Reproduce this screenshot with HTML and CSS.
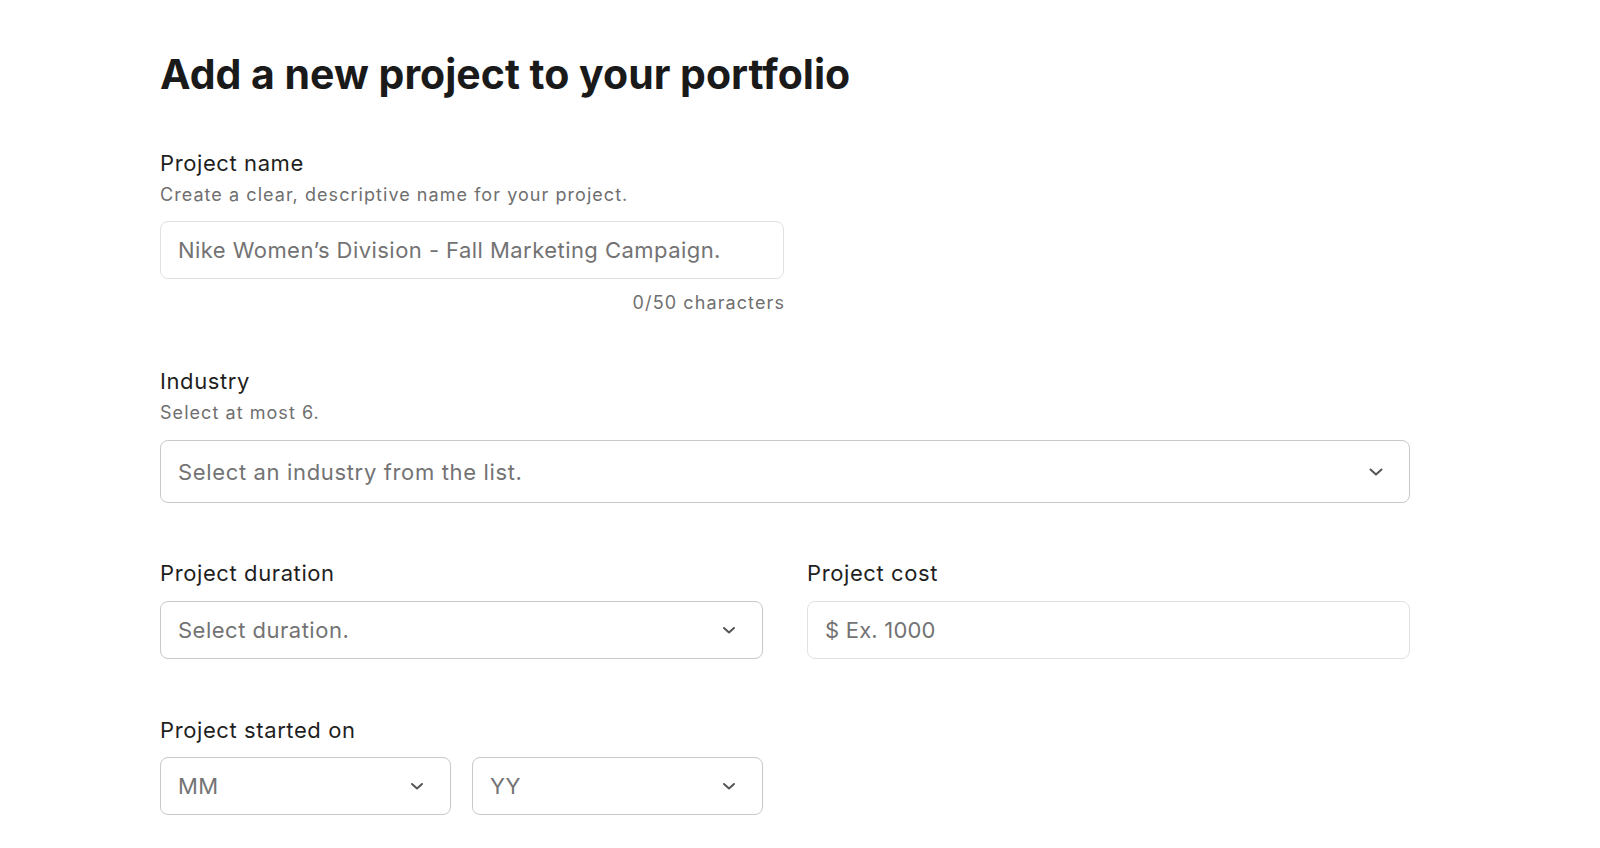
FILE: index.html
```html
<!DOCTYPE html>
<html lang="en">
<head>
<meta charset="utf-8">
<title>Add a new project</title>
<link rel="stylesheet" href="styles.css">
</head>
<body>
<main class="page">
  <h1 class="title">Add a new project to your portfolio</h1>

  <section class="field field-name">
    <label class="label" for="pname">Project name</label>
    <p class="help">Create a clear, descriptive name for your project.</p>
    <input id="pname" class="control control-light" type="text" placeholder="Nike Women’s Division - Fall Marketing Campaign.">
    <p class="counter">0/50 characters</p>
  </section>

  <section class="field field-industry">
    <div class="label">Industry</div>
    <p class="help">Select at most 6.</p>
    <div class="control select select-tall">
      <span class="ph">Select an industry from the list.</span>
      <svg class="chev" viewBox="0 0 16 16" width="16" height="16"><path d="M2.5 5.5 L8 10.5 L13.5 5.5" fill="none" stroke="#555" stroke-width="2" stroke-linecap="round" stroke-linejoin="round"/></svg>
    </div>
  </section>

  <section class="row">
    <div class="field">
      <div class="label">Project duration</div>
      <div class="control select">
        <span class="ph">Select duration.</span>
        <svg class="chev" viewBox="0 0 16 16" width="16" height="16"><path d="M3 6 L8 10.5 L13 6" fill="none" stroke="#555" stroke-width="2" stroke-linecap="round" stroke-linejoin="round"/></svg>
      </div>
    </div>
    <div class="field">
      <div class="label">Project cost</div>
      <div class="control control-light cost">
        <span class="ph">$ Ex. 1000</span>
      </div>
    </div>
  </section>

  <section class="row row-date">
    <div class="field">
      <div class="label">Project started on</div>
      <div class="pair">
        <div class="control select">
          <span class="ph">MM</span>
          <svg class="chev" viewBox="0 0 16 16" width="16" height="16"><path d="M3 6 L8 10.5 L13 6" fill="none" stroke="#555" stroke-width="2" stroke-linecap="round" stroke-linejoin="round"/></svg>
        </div>
        <div class="control select">
          <span class="ph">YY</span>
          <svg class="chev" viewBox="0 0 16 16" width="16" height="16"><path d="M3 6 L8 10.5 L13 6" fill="none" stroke="#555" stroke-width="2" stroke-linecap="round" stroke-linejoin="round"/></svg>
        </div>
      </div>
    </div>
    <div></div>
  </section>
</main>
</body>
</html>
```

FILE: styles.css
```css
* { box-sizing: border-box; }
html, body { margin: 0; padding: 0; background: #fff; }
body {
  font-family: Inter, "Liberation Sans", Arial, sans-serif;
  color: #1c1c1c;
}
.page {
  width: 1410px;
  padding: 49px 0 0 160px;
}
.title {
  margin: 0;
  font-size: 41px;
  line-height: 50px;
  font-weight: 700;
  color: #1a1a1a;
  letter-spacing: 0;
}
.field { display: flex; flex-direction: column; }
.field-name { margin-top: 50px; width: 624px; }
.field-industry { margin-top: 52px; }
.label {
  font-size: 22px;
  line-height: 28px;
  color: #1f1f1f;
  letter-spacing: 0.6px;
}
.help {
  margin: 6px 0 0;
  font-size: 18px;
  line-height: 24px;
  color: #6f6f6f;
  letter-spacing: 1.05px;
}
.control {
  margin-top: 14px;
  height: 58px;
  border: 1px solid #c9c9c9;
  border-radius: 8px;
  background: #fff;
  display: flex;
  align-items: center;
  padding: 0 17px;
  font-family: inherit;
  font-size: 22px;
  letter-spacing: 0.5px;
  color: #737373;
  outline: none;
}
.control-light { border-color: #e2e2e2; }
input.control { width: 100%; }
input.control::placeholder { color: #737373; letter-spacing: 0.45px; }
.ph { color: #737373; font-size: 22px; }
.select { justify-content: space-between; padding-right: 25px; }
.select-tall { height: 63px; margin-top: 15px; }
.select-tall .ph { letter-spacing: 0.65px; }
.cost .ph { letter-spacing: 0.2px; }
.chev { display: block; flex: none; }
.counter {
  margin: 12px -1px 0 0;
  text-align: right;
  font-size: 18px;
  line-height: 24px;
  color: #6f6f6f;
  letter-spacing: 1.1px;
}
.row {
  display: grid;
  grid-template-columns: 1fr 1fr;
  column-gap: 44px;
  margin-top: 56px;
}
.row-date { margin-top: 57px; }
.row-date .control { margin-top: 13px; }
.pair {
  display: grid;
  grid-template-columns: 1fr 1fr;
  column-gap: 21px;
}
```
